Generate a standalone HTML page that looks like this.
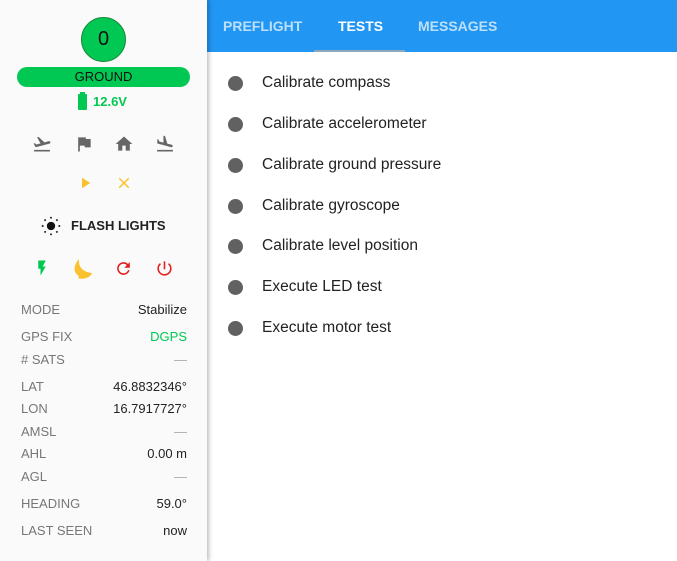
<!DOCTYPE html>
<html><head><style>
*{margin:0;padding:0;box-sizing:border-box}
body{width:677px;height:561px;overflow:hidden;background:#fff;font-family:"Liberation Sans",sans-serif;position:relative}
.side{position:absolute;left:0;top:0;width:207px;height:561px;background:#fafafa;box-shadow:2px 0 4px rgba(0,0,0,.25);z-index:2}
.hdr{position:absolute;left:207px;top:0;width:470px;height:52px;background:#2196f3}
.tab{position:absolute;top:18px;font-size:14px;font-weight:bold;color:rgba(255,255,255,.7)}
.a{position:absolute}
.row{position:absolute;left:21px;width:166px;font-size:13px;color:#777}
.row span{position:absolute;right:0;color:#222}
.it{position:absolute;left:228px;font-size:15.5px;color:#222}
.it:before{content:"";position:absolute;left:0;top:1px;width:15px;height:15px;border-radius:50%;background:#616161}
.it b{font-weight:normal;position:absolute;left:34px;top:-1px;white-space:nowrap}
svg{position:absolute}
</style></head><body>
<div class="side">
<div class="a" style="left:81px;top:17px;width:45px;height:45px;border-radius:50%;background:#00c853;border:1px solid #1a8a3a;text-align:center;line-height:43px;font-size:20px;color:#111">0</div>
<div class="a" style="left:17px;top:67px;width:173px;height:20px;border-radius:10px;background:#00c853;text-align:center;line-height:20px;font-size:13px;color:#111">GROUND</div>
<div class="a" style="left:78px;top:94px;width:9px;height:16px;background:#00c853;border-radius:1px"></div>
<div class="a" style="left:80px;top:92px;width:5px;height:3px;background:#00c853"></div>
<div class="a" style="left:93px;top:94px;font-size:13px;font-weight:bold;color:#00c853">12.6V</div>
<svg style="left:32px;top:134px" width="20" height="20" viewBox="0 0 24 24" fill="#666"><path d="M2.5 19h19v2h-19zm19.57-9.36c-.21-.8-1.04-1.28-1.840-1.06L14.92 10l-6.9-6.43-1.93.51 4.14 7.17-4.97 1.33-1.97-1.54-1.45.39 1.82 3.160.77 1.33 1.6-.43 5.31-1.42 4.35-1.16L21 11.49c.81-.23 1.28-1.05 1.07-1.85z"/></svg>
<svg style="left:74px;top:134px" width="20" height="20" viewBox="0 0 24 24" fill="#666"><path d="M14.4 6L14 4H5v17h2v-7h5.6l.4 2h7V6z"/></svg>
<svg style="left:114px;top:134px" width="20" height="20" viewBox="0 0 24 24" fill="#666"><path d="M10 20v-6h4v6h5v-8h3L12 3 2 12h3v8z"/></svg>
<svg style="left:155px;top:134px" width="20" height="20" viewBox="0 0 24 24" fill="#666"><path d="M2.5 19h19v2h-19zm7.18-5.73l4.35 1.16 5.31 1.42c.8.21 1.62-.26 1.84-1.06.21-.8-.26-1.62-1.06-1.84l-5.31-1.42-2.76-9.02L10.12 2v8.28L5.15 8.95l-.93-2.32-1.45-.39v5.17l1.6.43 5.31 1.43z"/></svg>
<svg style="left:76px;top:174px" width="18" height="18" viewBox="0 0 24 24" fill="#fbc02d"><path d="M8 5v14l11-7z"/></svg>
<svg style="left:115px;top:174px" width="18" height="18" viewBox="0 0 24 24" fill="#fbc02d"><path d="M19 6.41L17.59 5 12 10.59 6.41 5 5 6.41 10.59 12 5 17.590 6.41 19 12 13.41 17.59 19 19 17.59 13.41 12z"/></svg>
<svg style="left:41px;top:216px" width="20" height="20" viewBox="0 0 24 24" fill="#111"><circle cx="12" cy="12" r="5"/><g stroke="#111" stroke-width="2"><path d="M12 1v2M12 21v2M1 12h2M21 12h2M4.2 4.2l1.4 1.4M18.4 18.4l1.4 1.4M4.2 19.8l1.4-1.4M18.4 5.6l1.4-1.4"/></g></svg>
<div class="a" style="left:71px;top:218px;font-size:13px;font-weight:bold;color:#222">FLASH LIGHTS</div>
<svg style="left:33px;top:259px" width="18" height="18" viewBox="0 0 24 24" fill="#00c853"><path d="M7 2v11h3v9l7-12h-4l4-8z"/></svg>
<svg style="left:71px;top:257px" width="24" height="24" viewBox="0 0 24 24" fill="#fbc02d"><path d="M8 2c-1 7 3 13 13 14-2 5-9 7-14 5l1-2c-4-2-5-6-4-10 1-3 2-5 4-7z"/></svg>
<svg style="left:114px;top:259px" width="19" height="19" viewBox="0 0 24 24" fill="#e41e1e"><path d="M17.65 6.35A7.958 7.958 0 0012 4c-4.42 0-7.99 3.58-7.99 8s3.57 8 7.99 8c3.73 0 6.84-2.55 7.73-6h-2.08A5.99 5.99 0 0112 18c-3.31 0-6-2.690-6-6s2.69-6 6-6c1.66 0 3.14.69 4.22 1.78L13 11h7V4l-2.35 2.35z"/></svg>
<svg style="left:155px;top:259px" width="19" height="19" viewBox="0 0 24 24" fill="#e41e1e"><path d="M13 3h-2v10h2V3zm4.83 2.17l-1.42 1.42A6.92 6.92 0 0119 12c0 3.87-3.13 7-7 7A6.995 6.995 0 017.58 6.58L6.17 5.17A8.932 8.932 0 003 12a9 9 0 0018 0c0-2.74-1.23-5.18-3.17-6.830z"/></svg>
<div class="row" style="top:302px">MODE<span>Stabilize</span></div>
<div class="row" style="top:329px">GPS FIX<span style="color:#00c853">DGPS</span></div>
<div class="row" style="top:352px"># SATS<span style="color:#aaa">—</span></div>
<div class="row" style="top:379px">LAT<span>46.8832346°</span></div>
<div class="row" style="top:401px">LON<span>16.7917727°</span></div>
<div class="row" style="top:424px">AMSL<span style="color:#aaa">—</span></div>
<div class="row" style="top:446px">AHL<span>0.00 m</span></div>
<div class="row" style="top:469px">AGL<span style="color:#aaa">—</span></div>
<div class="row" style="top:496px">HEADING<span>59.0°</span></div>
<div class="row" style="top:523px">LAST SEEN<span>now</span></div>
</div>
<div class="hdr"></div>
<div class="tab" style="left:223px">PREFLIGHT</div>
<div class="tab" style="left:338px;color:#fff">TESTS</div>
<div class="tab" style="left:418px">MESSAGES</div>
<div class="a" style="left:314px;top:50px;width:91px;height:2px;background:#8fa7b8"></div>
<div class="it" style="top:75px"><b>Calibrate compass</b></div>
<div class="it" style="top:116px"><b>Calibrate accelerometer</b></div>
<div class="it" style="top:157px"><b>Calibrate ground pressure</b></div>
<div class="it" style="top:198px"><b>Calibrate gyroscope</b></div>
<div class="it" style="top:238px"><b>Calibrate level position</b></div>
<div class="it" style="top:279px"><b>Execute LED test</b></div>
<div class="it" style="top:320px"><b>Execute motor test</b></div>
</body></html>
